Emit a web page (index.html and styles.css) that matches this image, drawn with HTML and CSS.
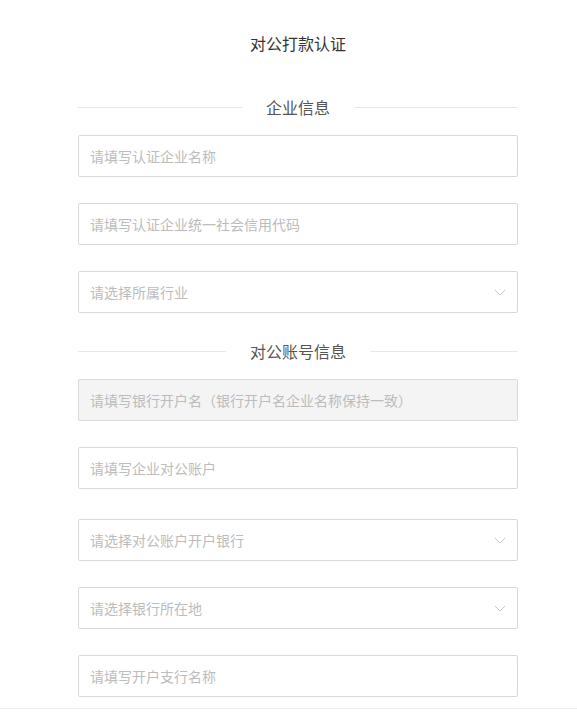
FILE: index.html
```html
<!DOCTYPE html>
<html lang="zh-CN">
<head>
<meta charset="utf-8">
<title>对公打款认证</title>
<link rel="stylesheet" href="styles.css">
</head>
<body>
<div class="page">
  <h1 class="title">对公打款认证</h1>
  <div class="section-head sh1"><span class="line"></span><span class="label">企业信息</span><span class="line"></span></div>
  <div class="fields">
    <div class="field"><input class="input" placeholder="请填写认证企业名称"></div>
    <div class="field"><input class="input" placeholder="请填写认证企业统一社会信用代码"></div>
    <div class="field select"><span class="ph">请选择所属行业</span><svg class="chev" width="12" height="7" viewBox="0 0 12 7"><path d="M1 1 L6 6 L11 1" fill="none" stroke="#c8c8c8" stroke-width="1"/></svg></div>
  </div>
  <div class="section-head sh2"><span class="line"></span><span class="label">对公账号信息</span><span class="line"></span></div>
  <div class="fields">
    <div class="field disabled"><input class="input" placeholder="请填写银行开户名（银行开户名企业名称保持一致）" disabled></div>
    <div class="field"><input class="input" placeholder="请填写企业对公账户"></div>
    <div class="field select wide-gap"><span class="ph">请选择对公账户开户银行</span><svg class="chev" width="12" height="7" viewBox="0 0 12 7"><path d="M1 1 L6 6 L11 1" fill="none" stroke="#c8c8c8" stroke-width="1"/></svg></div>
    <div class="field select"><span class="ph">请选择银行所在地</span><svg class="chev" width="12" height="7" viewBox="0 0 12 7"><path d="M1 1 L6 6 L11 1" fill="none" stroke="#c8c8c8" stroke-width="1"/></svg></div>
    <div class="field"><input class="input" placeholder="请填写开户支行名称"></div>
  </div>
</div>
<div class="footer"></div>
</body>
</html>
```
FILE: styles.css
```css
* { box-sizing: border-box; }
html, body { margin: 0; padding: 0; background: #fff; }
body {
  font-family: "Noto Sans CJK SC", "Noto Sans", sans-serif;
  color: #333;
  overflow: hidden;
}
.page {
  width: 440px;
  margin-left: 78px;
}
.title {
  margin: 0;
  height: 86px;
  line-height: 86px;
  text-align: center;
  font-size: 16px;
  font-weight: 400;
  color: #333;
}
.section-head {
  display: flex;
  align-items: center;
  gap: 24px;
  height: 30px;
}
.sh1 { margin-top: 6px; margin-bottom: 13px; }
.sh2 { margin-top: 23px; margin-bottom: 13px; }
.section-head .line {
  flex: 1;
  height: 1px;
  background: #e8e8e8;
}
.section-head .label {
  font-size: 16px;
  color: #555;
  line-height: 30px;
}
.fields {
  display: flex;
  flex-direction: column;
  gap: 26px;
}
.field {
  height: 42px;
  border: 1px solid #d9d9d9;
  border-radius: 2px;
  background: #fff;
  display: flex;
  align-items: center;
  position: relative;
}
.field.wide-gap { margin-top: 4px; }
.field.disabled { background: #f4f4f4; }
.input {
  width: 100%;
  height: 100%;
  border: 0;
  outline: none;
  background: transparent;
  padding: 0 11px;
  font-family: inherit;
  font-size: 14px;
  color: #333;
}
.input::placeholder { color: #bcbcbc; }
.select { padding: 0 11px; justify-content: space-between; }
.ph { font-size: 14px; color: #bcbcbc; }
.chev { margin-right: 0; }
.footer {
  margin-top: 11px;
  border-top: 1px solid #eeeeee;
  height: 20px;
}
```
